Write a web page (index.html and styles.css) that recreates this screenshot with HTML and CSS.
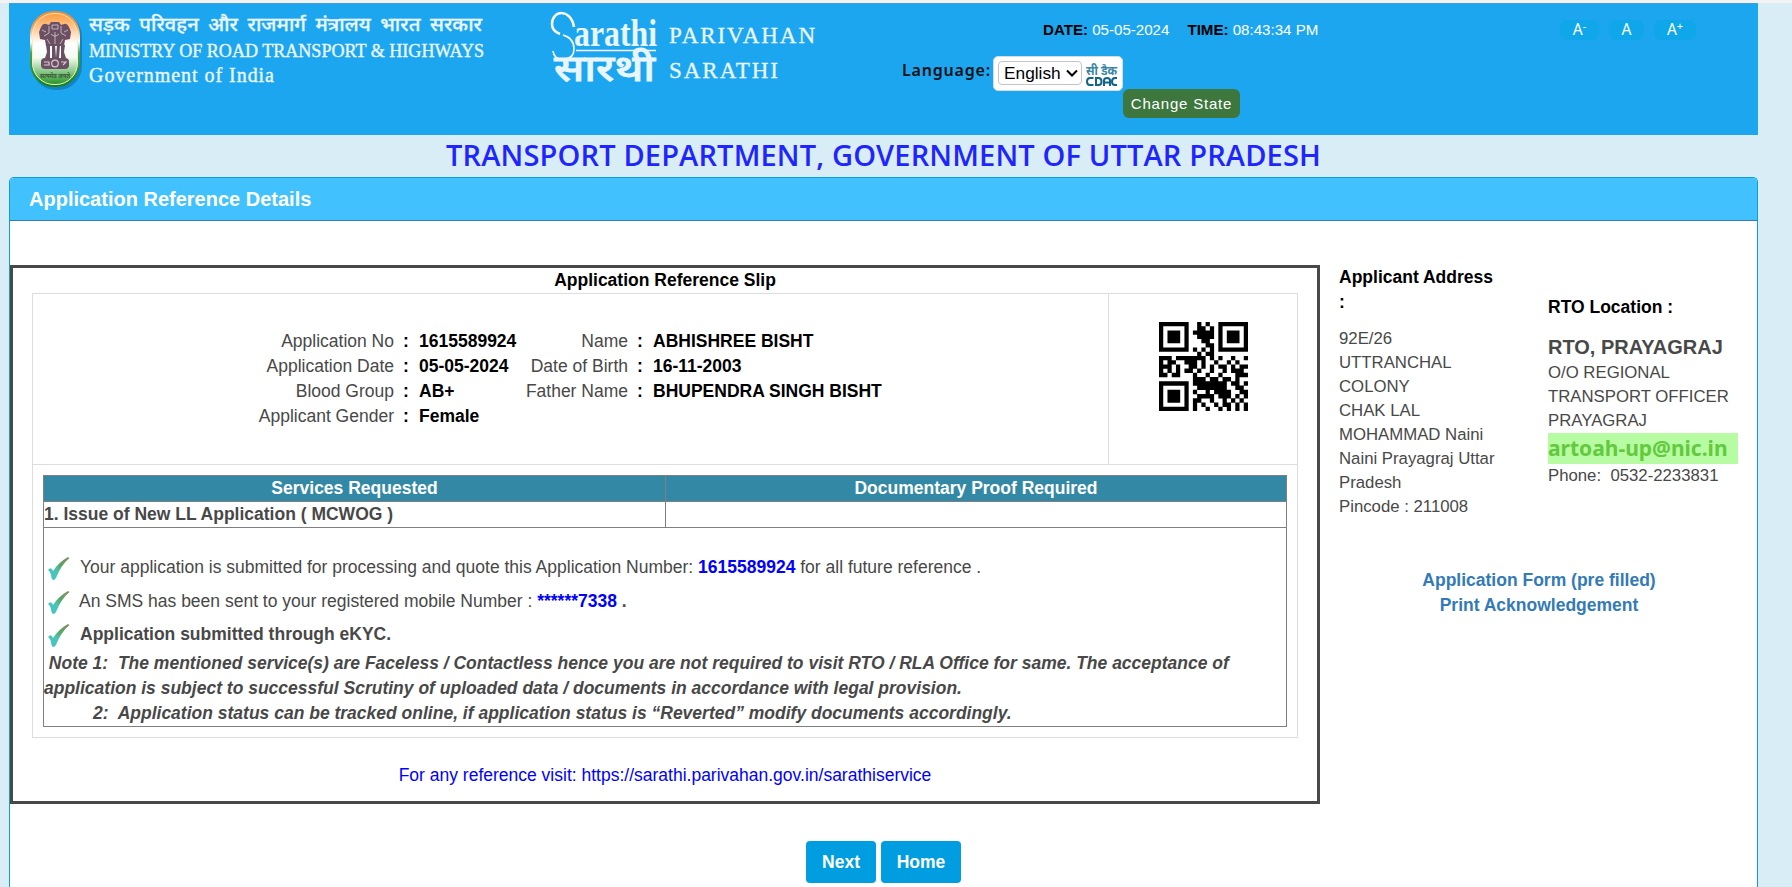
FILE: index.html
```html
<!DOCTYPE html>
<html lang="en">
<head>
<meta charset="utf-8">
<title>Application Reference Details</title>
<link rel="stylesheet" href="styles.css">
</head>
<body>
<div class="page">
  <header class="banner">
    <div class="ministry">
      <svg class="emblem" viewBox="0 0 54 80">
        <defs>
          <linearGradient id="rim" x1="0" y1="0" x2="0" y2="1">
            <stop offset="0" stop-color="#f58a2e"/><stop offset=".2" stop-color="#f9a04a"/><stop offset=".4" stop-color="#fff"/><stop offset=".55" stop-color="#4da34d"/><stop offset="1" stop-color="#0b8612"/>
          </linearGradient>
          <linearGradient id="fill" x1="0" y1="0" x2="0" y2="1">
            <stop offset="0" stop-color="#ff9a3c"/><stop offset=".25" stop-color="#ffd3a8"/><stop offset=".42" stop-color="#fff"/><stop offset=".62" stop-color="#f3fbf3"/><stop offset=".85" stop-color="#78c077"/><stop offset="1" stop-color="#219425"/>
          </linearGradient>
        </defs>
        <rect x="3" y="3" width="50" height="77" rx="24" fill="#0b5f96" opacity=".5"/>
        <rect x="1" y="1" width="50" height="76" rx="24" fill="url(#rim)"/>
        <rect x="3.500" y="3.500" width="45" height="71" rx="21.500" fill="url(#fill)" stroke="#ffe9c8" stroke-width="1"/>
        <g fill="#6b5064">
          <path d="M12 17q2-4 5-3l3 1 2-3h8l2 3 3-1q3-1 5 3l2 5-1 7-5 1-1 6H17l-1-6-5-1-1-7z"/>
          <path d="M17 35h4v13h-5l2-6zM23 35h3l1 13h-4zM28 35h3l-1 13h-3zM32 35h4l-1 7 2 6h-5z"/>
          <rect x="12" y="48" width="28" height="11" rx="4"/>
        </g>
        <g fill="none" stroke="#d9c8d2" stroke-width=".8">
          <path d="M20 16v7l-5 3M32 16v7l5 3M23 15h6v4h-6zM22 24q4 4 8 0M18 29l3 5M34 29l-3 5M26 22v12M13 20l4 2M39 20l-4 2"/>
          <circle cx="26" cy="53.500" r="3.300" stroke-width="1.200"/><path d="M15 52h5v3h-5M32 52h5l-3 3" stroke-width="1.200"/>
        </g>
        <text x="11" y="67.500" class="motto" textLength="30" lengthAdjust="spacingAndGlyphs">सत्यमेव जयते</text>
      </svg>
      <svg class="ministry-name" viewBox="0 0 400 80">
        <text x="0" y="25" class="hindi" textLength="393" lengthAdjust="spacingAndGlyphs">सड़क परिवहन और राजमार्ग मंत्रालय भारत सरकार</text>
        <text x="0" y="51" class="serif-line" textLength="395" lengthAdjust="spacingAndGlyphs">MINISTRY OF ROAD TRANSPORT &amp; HIGHWAYS</text>
        <text x="0" y="75.500" class="serif-line large" textLength="185" lengthAdjust="spacing">Government of India</text>
      </svg>
    </div>
    <svg class="sarathi" viewBox="0 0 270 84">
      <path d="M23 17C20-2 1 0 1 14q0 7 8 10" fill="none" stroke="#fff" stroke-width="2.500"/>
      <path d="M12 25q11 3 11 14 0 9-9 10-11 1-12-8" fill="none" stroke="#fff" stroke-width="1.600"/>
      <text x="23" y="35.500" class="logo-latin" textLength="83" lengthAdjust="spacingAndGlyphs">arathi</text>
      <path d="M25 40.500h80" stroke="#fff" stroke-width="1.300"/>
      <text x="3" y="58" class="logo-hindi" transform="scale(1 1.22)" textLength="101" lengthAdjust="spacingAndGlyphs">सारथी</text>
      <text x="118" y="33" class="logo-side" textLength="146">PARIVAHAN</text>
      <text x="118" y="68" class="logo-side" textLength="109">SARATHI</text>
    </svg>
    <div class="controls">
      <div class="clock"><b>DATE:</b> <span>05-05-2024</span><b class="time">TIME:</b> <span>08:43:34 PM</span></div>
      <div class="lang-row">
        <span class="lang-label">Language:</span>
        <div class="lang-box">
          <div class="select">English<svg viewBox="0 0 12 8"><path d="M1 1.500l5 5 5-5" fill="none" stroke="#000" stroke-width="2"/></svg></div>
          <svg class="cdac" viewBox="0 0 32 28">
            <text x="0" y="14" class="cdac-hi" textLength="31" lengthAdjust="spacingAndGlyphs">सी डैक</text>
            <g fill="none" stroke="#12638a" stroke-width="2">
              <path d="M7.500 17H4q-3 0-3 3.500T4 24h3.500M10 17h2.500q3 0 3 3.500t-3 3.500H10zM18 25v-5.500q0-2.500 3-2.500t3 2.500V25M18 21.500h6M31 17h-2q-3 0-3 3.500t3 3.500h2"/>
            </g>
          </svg>
        </div>
      </div>
      <button class="change">Change State</button>
    </div>
    <nav class="sizes"><a>A<sup>-</sup></a><a>A</a><a>A<sup>+</sup></a></nav>
  </header>

  <h1 class="dept"><span>TRANSPORT DEPARTMENT, GOVERNMENT OF UTTAR PRADESH</span></h1>

  <section class="panel">
    <h2 class="panel-head">Application Reference Details</h2>
    <div class="panel-body">
      <div class="slip">
        <div class="slip-title">Application Reference Slip</div>
        <div class="slip-table">
          <div class="top-row">
            <div class="details">
              <div class="grid">
                <span>Application No</span><i>:</i><b>1615589924</b><span>Name</span><i>:</i><b>ABHISHREE BISHT</b>
                <span>Application Date</span><i>:</i><b>05-05-2024</b><span>Date of Birth</span><i>:</i><b>16-11-2003</b>
                <span>Blood Group</span><i>:</i><b>AB+</b><span>Father Name</span><i>:</i><b>BHUPENDRA SINGH BISHT</b>
                <span>Applicant Gender</span><i>:</i><b>Female</b>
              </div>
            </div>
            <div class="qr-cell"><svg class="qr" id="qr" viewBox="0 0 21 21"></svg></div>
          </div>
          <div class="services">
            <div class="srow shead"><div>Services Requested</div><div>Documentary Proof Required</div></div>
            <div class="srow"><div>1. Issue of New LL Application ( MCWOG )</div><div></div></div>
            <div class="messages">
              <svg width="0" height="0" class="defs"><defs>
                <linearGradient id="tick" x1="0" y1="1" x2="1" y2="0"><stop offset="0" stop-color="#3cc8d0"/><stop offset=".4" stop-color="#4cc4b4"/><stop offset=".6" stop-color="#55a866"/><stop offset="1" stop-color="#8a8a62"/></linearGradient>
              </defs></svg>
              <p class="msg"><svg class="tick" viewBox="0 0 24 24"><path d="M1 14q3-4 5 1Q12 6 21 1l1.500 1Q14 9 9 22q-3 4-4.500 0Q4 16 1 14z" fill="url(#tick)"/></svg><span>Your application is submitted for processing and quote this Application Number: <b class="blue">1615589924</b> for all future reference .</span></p>
              <p class="msg"><svg class="tick" viewBox="0 0 24 24"><path d="M1 14q3-4 5 1Q12 6 21 1l1.500 1Q14 9 9 22q-3 4-4.500 0Q4 16 1 14z" fill="url(#tick)"/></svg><span class="sms">An SMS has been sent to your registered mobile Number : <b class="blue">******7338</b> <b>.</b></span></p>
              <p class="msg"><svg class="tick" viewBox="0 0 24 24"><path d="M1 14q3-4 5 1Q12 6 21 1l1.500 1Q14 9 9 22q-3 4-4.500 0Q4 16 1 14z" fill="url(#tick)"/></svg><b>Application submitted through eKYC.</b></p>
              <p class="note">&nbsp;Note 1:&nbsp; The mentioned service(s) are Faceless / Contactless hence you are not required to visit RTO / RLA Office for same. The acceptance of<br>application is subject to successful Scrutiny of uploaded data / documents in accordance with legal provision.<br><span class="second">2:&nbsp; Application status can be tracked online, if application status is “Reverted” modify documents accordingly.</span></p>
            </div>
          </div>
        </div>
        <div class="visit">For any reference visit: https://sarathi.parivahan.gov.in/sarathiservice</div>
      </div>
      <aside class="side">
        <div class="cols">
          <div class="address">
            <h3>Applicant Address<br>:</h3>
            <p>92E/26<br>UTTRANCHAL<br>COLONY<br>CHAK LAL<br>MOHAMMAD Naini<br>Naini Prayagraj Uttar<br>Pradesh<br>Pincode : 211008</p>
          </div>
          <div class="rto">
            <h3>RTO Location :</h3>
            <h4>RTO, PRAYAGRAJ</h4>
            <p>O/O REGIONAL<br>TRANSPORT OFFICER<br>PRAYAGRAJ</p>
            <div class="mail">artoah-up@nic.in</div>
            <p>Phone:&nbsp; 0532-2233831</p>
          </div>
        </div>
        <div class="links"><a>Application Form (pre filled)</a><a>Print Acknowledgement</a></div>
      </aside>
    </div>
    <div class="buttons"><button>Next</button><button>Home</button></div>
  </section>
</div>
<script src="qr.js"></script>
</body>
</html>
```
FILE: qr.js
```js
// One string per module row; '#' is a dark module.
const rows = [
  "#######..#.#..#######",
  "#.....#..##.#.#.....#",
  "#.###.#.#####.#.###.#",
  "#.###.#..####.#.###.#",
  "#.###.#...##..#.###.#",
  "#.....#....##.#.....#",
  "#######.#.#.#.#######",
  ".........#.##........",
  "###.#######.#.#..#..#",
  "#.##..###.#..#..#.#..",
  "###.#..##.#.#.##.#.##",
  "#.#.#.##.#..#..#.###.",
  "##.##...#..#..#...###",
  "........###.##.##.#..",
  "#######.########.##.#",
  "#.....#..#######..##.",
  "#.###.#.#..#.####..##",
  "#.###.#..####.###.#.#",
  "#.###.#.##..#..#.#.#.",
  "#.....#.#.#..#.##.#.#",
  "#######.#..#..#.#.#.#"
];
// Horizontal runs are merged so that neighbouring modules join without seams.
const d = rows.flatMap((r, y) =>
  [...r.matchAll(/#+/g)].map(m => `M${m.index} ${y}h${m[0].length}v1.03h-${m[0].length}z`)
).join("");
document.getElementById("qr").innerHTML = `<path d="${d}"/>`;
```
FILE: styles.css
```css
* { box-sizing: border-box; }
body {
  margin: 0;
  height: 887px;
  overflow: hidden;
  background: #d9edf6;
  border-top: 3px solid #f3f3f3;
  font: 17.5px/25px "Liberation Sans", Arial, sans-serif;
  color: #484848;
}
h1, h2, h3, h4, p { margin: 0; }
button { border: 0; font-family: inherit; }
.page { width: 1749px; margin-left: 9px; }

.banner { display: flex; height: 132px; background: #1da6f0; border-top: 1px solid #3f9fd8; }
.ministry { display: flex; width: 542px; padding: 6px 0 0 20px; }
.emblem { width: 54px; height: 80px; margin-right: 6px; }
.ministry-name { width: 400px; height: 80px; margin-top: -4px; overflow: visible; }
.ministry-name text, .sarathi text { fill: #eaf6ff; }
.motto { font: 700 7px "Noto Sans", sans-serif; fill: #40553a; }
.hindi { font: 500 18.5px "Noto Sans", "Noto Sans Devanagari", sans-serif; word-spacing: 4px; stroke: #eaf6ff; stroke-width: .3px; }
.serif-line { font: 19px "Liberation Serif", serif; stroke: #eaf6ff; stroke-width: .4px; }
.serif-line.large { font-size: 20px; }
.sarathi { width: 270px; height: 84px; margin-top: 6px; overflow: visible; }
.logo-latin { font: 700 37px "Liberation Serif", serif; }
.logo-hindi { font: 500 30px "Noto Sans", sans-serif; stroke: #eaf6ff; stroke-width: .7px; }
.logo-side { font: 23px "Liberation Serif", serif; stroke: #eaf6ff; stroke-width: .3px; }

.controls { width: 518px; padding: 14px 0 0 73px; }
.clock { height: 24px; margin-left: 149px; font-size: 15.1px; line-height: 24px; color: #fff; white-space: pre; }
.clock b { color: #000; }
.clock .time { margin-left: 18px; }
.lang-row { display: flex; height: 35px; margin-top: 14px; }
.lang-label { width: 99px; padding-left: 8px; font: 600 16px/28px "Noto Sans", sans-serif; letter-spacing: .8px; color: #0a1014; white-space: nowrap; }
.lang-box { display: flex; width: 130px; height: 35px; padding: 4px; background: #fff; border: 1px solid #d6dce0; border-radius: 5px; }
.select { display: flex; align-items: center; width: 85px; height: 24px; padding-left: 5px; border: 1px solid #c4c4c4; border-radius: 4px; font-size: 17.3px; color: #000; }
.select svg { width: 12px; height: 8px; margin-left: 5px; }
.cdac { width: 32px; height: 28px; margin-left: 4px; overflow: visible; }
.cdac-hi { font: 700 13px "Noto Sans", sans-serif; fill: #3c87a5; }
.change { display: block; width: 117px; height: 29px; margin: -2px 0 0 229px; padding: 0; border-radius: 6px; background: #3e773e; color: #fff; font-size: 15px; letter-spacing: .8px; }
.sizes { display: flex; gap: 10px; margin: 16px 0 0 221px; height: 20px; }
.sizes a { width: 39px; border-radius: 7px; background: #0fa7ea; color: #fff; font: 15.5px/19px "Noto Sans", sans-serif; text-align: center; }
.sizes a:nth-child(2) { width: 35px; }
.sizes a:nth-child(3) { width: 42px; }
.sizes sup { font-size: 11px; line-height: 0; vertical-align: 5px; }

.dept { height: 42px; text-align: center; font: 600 29px/40px "Open Sans", sans-serif; color: #1f25ff; white-space: nowrap; }
.dept span { letter-spacing: .15px; }

.panel { height: 730px; background: #fff; border: 1px solid #0d9ddb; border-bottom: 0; border-radius: 5px 5px 0 0; overflow: hidden; }
.panel-head { height: 43px; padding-left: 19px; background: #41c2ff; border-bottom: 1px solid #337ab7; color: #fff; font-size: 20px; line-height: 42px; }
.panel-body { display: flex; padding-top: 44px; }
.slip { width: 1310px; height: 539px; border: 3px solid #484848; }
.slip-title { height: 25px; text-align: center; font-weight: 700; line-height: 24px; color: #000; }
.slip-table { width: 1266px; height: 445px; margin-left: 19px; border: 1px solid #ddd; }
.top-row { display: flex; height: 171px; border-bottom: 1px solid #ddd; }
.details { width: 1076px; border-right: 1px solid #ddd; padding-top: 35px; }
.grid { display: grid; grid-template-columns: 361px 25px 104px 105px 25px 300px; grid-auto-rows: 25px; }
.grid span { text-align: right; white-space: nowrap; }
.grid i { font-style: normal; font-weight: 700; color: #000; padding-left: 9px; }
.grid b { color: #000; white-space: nowrap; }
.qr-cell { flex: 1; padding: 28px 0 0 50px; }
.qr { display: block; width: 89px; height: 89px; }
.services { width: 1244px; height: 252px; margin: 10px 0 0 10px; border: 1px solid #808080; }
.srow { display: grid; grid-template-columns: 622px 1fr; height: 26px; border-bottom: 1px solid #808080; font-weight: 700; line-height: 24px; }
.srow > :first-child { border-right: 1px solid #808080; }
.shead { background: #3389a5; color: #fff; text-align: center; }
.messages { display: flex; flex-direction: column; padding-top: 23px; }
.defs { position: absolute; }
.msg { display: flex; align-items: center; height: 33.5px; }
.msg:last-of-type { height: 32px; }
.tick { width: 24px; height: 24px; margin: 1px 9px 0 3px; }
.sms { margin-left: -1px; }
.msg .blue { color: #00f; }
.note { margin-top: -1px; font-weight: 700; font-style: italic; white-space: nowrap; }
.second { margin-left: 49px; }
.visit { margin-top: 25px; text-align: center; color: #00f; }

.side { width: 420px; padding-left: 19px; }
.cols { display: flex; height: 303px; font-size: 16.75px; line-height: 24px; white-space: nowrap; }
.side h3 { font-size: 17.5px; line-height: 25px; color: #000; }
.address { width: 209px; }
.address p { margin-top: 12px; }
.rto { width: 190px; padding-top: 30px; }
.rto h4 { margin-top: 13px; font-size: 20px; line-height: 28px; }
.mail { height: 31px; background: #b7fca2; color: #63c93f; font: 700 21px/31px "Noto Sans", sans-serif; }
.links { display: flex; flex-direction: column; align-items: center; width: 400px; color: #337ab7; font-weight: 700; }
.buttons { display: flex; gap: 5px; margin: 37px 0 0 796px; }
.buttons button { width: 70px; height: 42px; padding: 0; border-radius: 4px; background: #009de0; color: #fff; font-size: 17.5px; font-weight: 700; }
.buttons button:last-child { width: 80px; }
```
